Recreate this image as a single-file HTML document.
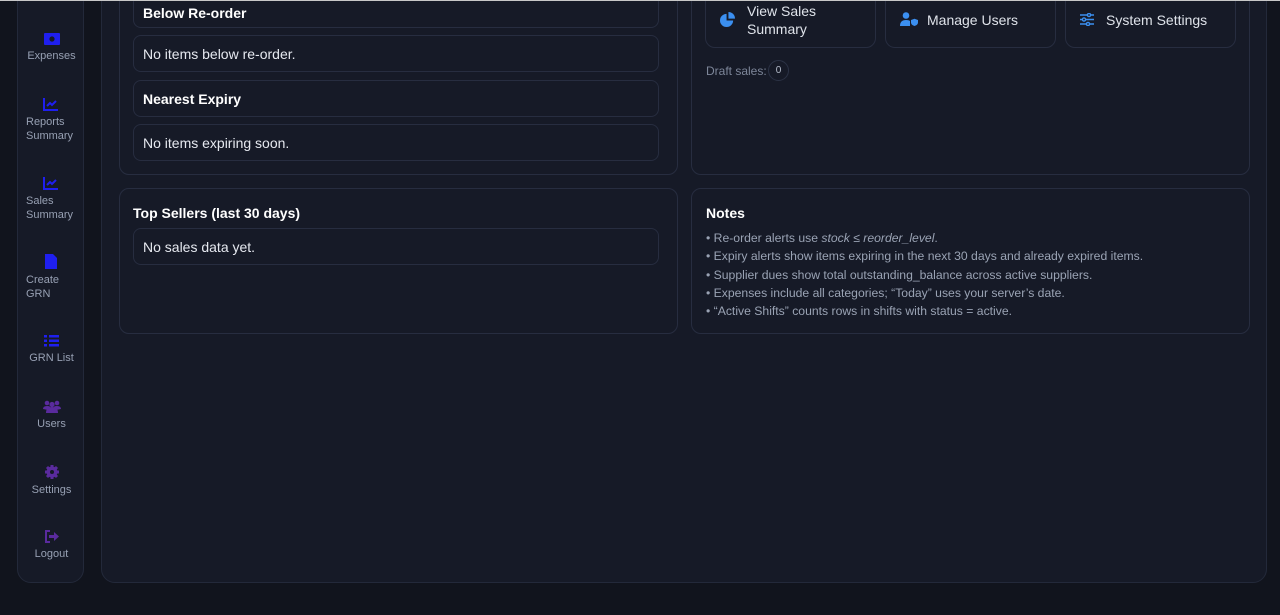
<!DOCTYPE html>
<html><head><style>
*{box-sizing:border-box;margin:0;padding:0}
body{width:1280px;height:615px;background:#11141d;font-family:"Liberation Sans",sans-serif;position:relative;overflow:hidden;color:#e6e9f0}
.topline{position:absolute;left:0;top:0;width:1280px;height:1px;background:#c8c8c8}
.side{position:absolute;left:17px;top:-20px;width:67px;height:603px;background:#161a27;border:1px solid #23293a;border-radius:14px}
.si{position:absolute;left:0;width:67px;font-size:11px;color:#97a0b3;line-height:14px}
.si svg{display:block;margin:0 auto 4px}
.main{position:absolute;left:101px;top:-20px;width:1166px;height:603px;background:#161a27;border:1px solid #23293a;border-radius:14px}
.card{position:absolute;background:#161a27;border:1px solid #272d40;border-radius:10px}
.box{position:absolute;left:133px;width:526px;border:1px solid #272d40;border-radius:8px;font-size:14px;padding-left:9px;display:flex;align-items:center}
.btn{position:absolute;top:-10px;height:58px;width:171px;border:1px solid #272d40;border-radius:10px;display:flex;align-items:center;font-size:14px;color:#dfe3ea}
.btn svg{margin:0 12px 0 14px;flex:none}
h4{font-size:14px;font-weight:bold;color:#fff}
.notes{position:absolute;left:706px;top:229px;font-size:12.2px;color:#9aa3b4;line-height:18.3px}
</style></head><body>
<div class="side">
 <div class="si" style="top:52px;text-align:center"><svg width="16" height="12" viewBox="0 0 16 12"><rect width="16" height="12" rx="1" fill="#1f1fef"/><circle cx="8" cy="6" r="2.6" fill="#161a27"/></svg>Expenses</div>
 <div class="si" style="top:116px;padding-left:8px"><svg width="16" height="14" viewBox="0 0 16 14" style="margin:0 0 4px 17px"><path d="M1 1v12h14" stroke="#1f1fef" stroke-width="2" fill="none"/><path d="M4 9l3-3 2 2 4-4" stroke="#1f1fef" stroke-width="2" fill="none"/></svg>Reports<br>Summary</div>
 <div class="si" style="top:195px;padding-left:8px"><svg width="16" height="14" viewBox="0 0 16 14" style="margin:0 0 4px 17px"><path d="M1 1v12h14" stroke="#1f1fef" stroke-width="2" fill="none"/><path d="M4 9l3-3 2 2 4-4" stroke="#1f1fef" stroke-width="2" fill="none"/></svg>Sales<br>Summary</div>
 <div class="si" style="top:273px;padding-left:8px"><svg width="12" height="15" viewBox="0 0 12 15" style="margin:0 0 4px 19px"><path d="M0 0h8l4 4v11H0z" fill="#1f1fef"/></svg>Create<br>GRN</div>
 <div class="si" style="top:354px;text-align:center"><svg width="15" height="12" viewBox="0 0 15 12"><g fill="#1f1fef"><rect y="0" width="3" height="2.5"/><rect x="5" y="0" width="10" height="2.5"/><rect y="4.5" width="3" height="2.5"/><rect x="5" y="4.5" width="10" height="2.5"/><rect y="9" width="3" height="2.5"/><rect x="5" y="9" width="10" height="2.5"/></g></svg>GRN List</div>
 <div class="si" style="top:419px;text-align:center"><svg width="18" height="13" viewBox="0 0 18 13"><g fill="#5a2b9e"><circle cx="4" cy="3" r="2.3"/><circle cx="14" cy="3" r="2.3"/><circle cx="9" cy="4.5" r="2.6"/><path d="M3 13q0-6 6-6t6 6z"/><path d="M0 9q0-3 4-3t3 2l-2 2z"/><path d="M18 9q0-3-4-3t-3 2l2 2z"/></g></svg>Users</div>
 <div class="si" style="top:484px;text-align:center"><svg width="14" height="14" viewBox="0 0 14 14"><circle cx="7" cy="7" r="5.5" fill="#5a2b9e"/><g stroke="#5a2b9e" stroke-width="3"><path d="M7 0v14M0 7h14M2 2l10 10M12 2L2 12"/></g><circle cx="7" cy="7" r="2" fill="#161a27"/></svg>Settings</div>
 <div class="si" style="top:549px;text-align:center"><svg width="14" height="13" viewBox="0 0 14 13"><path d="M5 1H1v11h4" stroke="#5a2b9e" stroke-width="2" fill="none"/><path d="M4 5h5V2l5 4.5-5 4.5V8H4z" fill="#5a2b9e"/></svg>Logout</div>
</div>
<div class="main"></div>
<div class="card" style="left:119px;top:-20px;width:559px;height:195px"></div>
<div class="card" style="left:691px;top:-20px;width:559px;height:195px"></div>
<div class="card" style="left:119px;top:188px;width:559px;height:146px"></div>
<div class="card" style="left:691px;top:188px;width:559px;height:146px"></div>
<div class="box" style="top:-6px;height:34px;padding-top:4px"><h4>Below Re-order</h4></div>
<div class="box" style="top:35px;height:37px">No items below re-order.</div>
<div class="box" style="top:80px;height:37px"><h4>Nearest Expiry</h4></div>
<div class="box" style="top:124px;height:37px">No items expiring soon.</div>
<h4 style="position:absolute;left:133px;top:205px">Top Sellers (last 30 days)</h4>
<div class="box" style="top:228px;height:37px">No sales data yet.</div>
<div class="btn" style="left:705px"><svg width="15" height="15" viewBox="0 0 16 16"><path d="M7 2a7 7 0 1 0 7 7H7z" fill="#3b8ff0"/><path d="M9 0a7 7 0 0 1 7 7H9z" fill="#3b8ff0"/></svg><span style="line-height:18px;margin-top:1px">View Sales<br>Summary</span></div>
<div class="btn" style="left:885px"><svg width="18" height="14" viewBox="0 0 18 14"><circle cx="6" cy="3.5" r="3.3" fill="#3b8ff0"/><path d="M0 14q0-6 6-6 3 0 4 1v5z" fill="#3b8ff0"/><path d="M11 8l3.5-1.2L18 8v2.5q0 2.5-3.5 3.5-3.5-1-3.5-3.5z" fill="#3b8ff0"/></svg><span style="margin-left:-3px;margin-top:1px">Manage Users</span></div>
<div class="btn" style="left:1065px"><svg width="14" height="13" viewBox="0 0 14 13"><g stroke="#3b8ff0" stroke-width="1.4" fill="#161a27"><path d="M0 2h14M0 6.5h14M0 11h14"/><circle cx="9" cy="2" r="1.6"/><circle cx="4" cy="6.5" r="1.6"/><circle cx="8" cy="11" r="1.6"/></g></svg><span style="margin-top:1px">System Settings</span></div>
<div style="position:absolute;left:706px;top:64px;font-size:12px;color:#7d8699">Draft sales:</div>
<div style="position:absolute;left:768px;top:60px;width:21px;height:21px;border:1px solid #2b3245;border-radius:50%;font-size:10px;color:#b6bdcb;text-align:center;line-height:19px">0</div>
<h4 style="position:absolute;left:706px;top:205px">Notes</h4>
<div class="notes">• Re-order alerts use <i>stock ≤ reorder_level</i>.<br>• Expiry alerts show items expiring in the next 30 days and already expired items.<br>• Supplier dues show total outstanding_balance across active suppliers.<br>• Expenses include all categories; “Today” uses your server’s date.<br>• “Active Shifts” counts rows in shifts with status = active.</div>
<div class="topline"></div>
</body></html>
